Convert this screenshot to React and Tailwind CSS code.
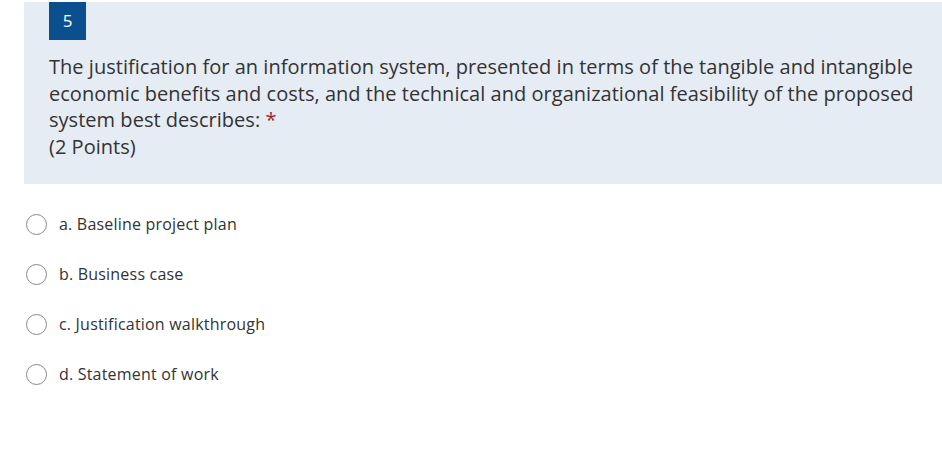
const options = [
  "a. Baseline project plan",
  "b. Business case",
  "c. Justification walkthrough",
  "d. Statement of work",
];

export default function App() {
  return (
    <div className="w-[942px] h-[462px] bg-white overflow-hidden font-['Open_Sans',sans-serif] text-[#333333]">
      <div className="pt-[2px] pl-6">
        <div className="bg-[#e6ecf3] h-[182px] pl-[25px] pr-4">
          <div className="w-[37px] h-[38px] bg-[#0b4f8f] text-white flex items-center justify-center text-[17px]">
            5
          </div>
          <div className="mt-[14px] text-[20px] leading-[26.5px] tracking-[0.03px] whitespace-nowrap">
            The justification for an information system, presented in terms of the tangible and intangible
            <br />
            economic benefits and costs, and the technical and organizational feasibility of the proposed
            <br />
            system best describes: <span className="text-[#a4262c]">*</span>
            <br />
            (2 Points)
          </div>
        </div>
      </div>
      <div className="pt-[30px] pl-[26px] flex flex-col gap-[30px]">
        {options.map((o) => (
          <label key={o} className="flex items-center gap-[12px] h-[20px]">
            <span className="w-[21px] h-[21px] rounded-full border border-[#8a8886] bg-white shrink-0" />
            <span className="text-[16px] tracking-[0.2px]">{o}</span>
          </label>
        ))}
      </div>
    </div>
  );
}
